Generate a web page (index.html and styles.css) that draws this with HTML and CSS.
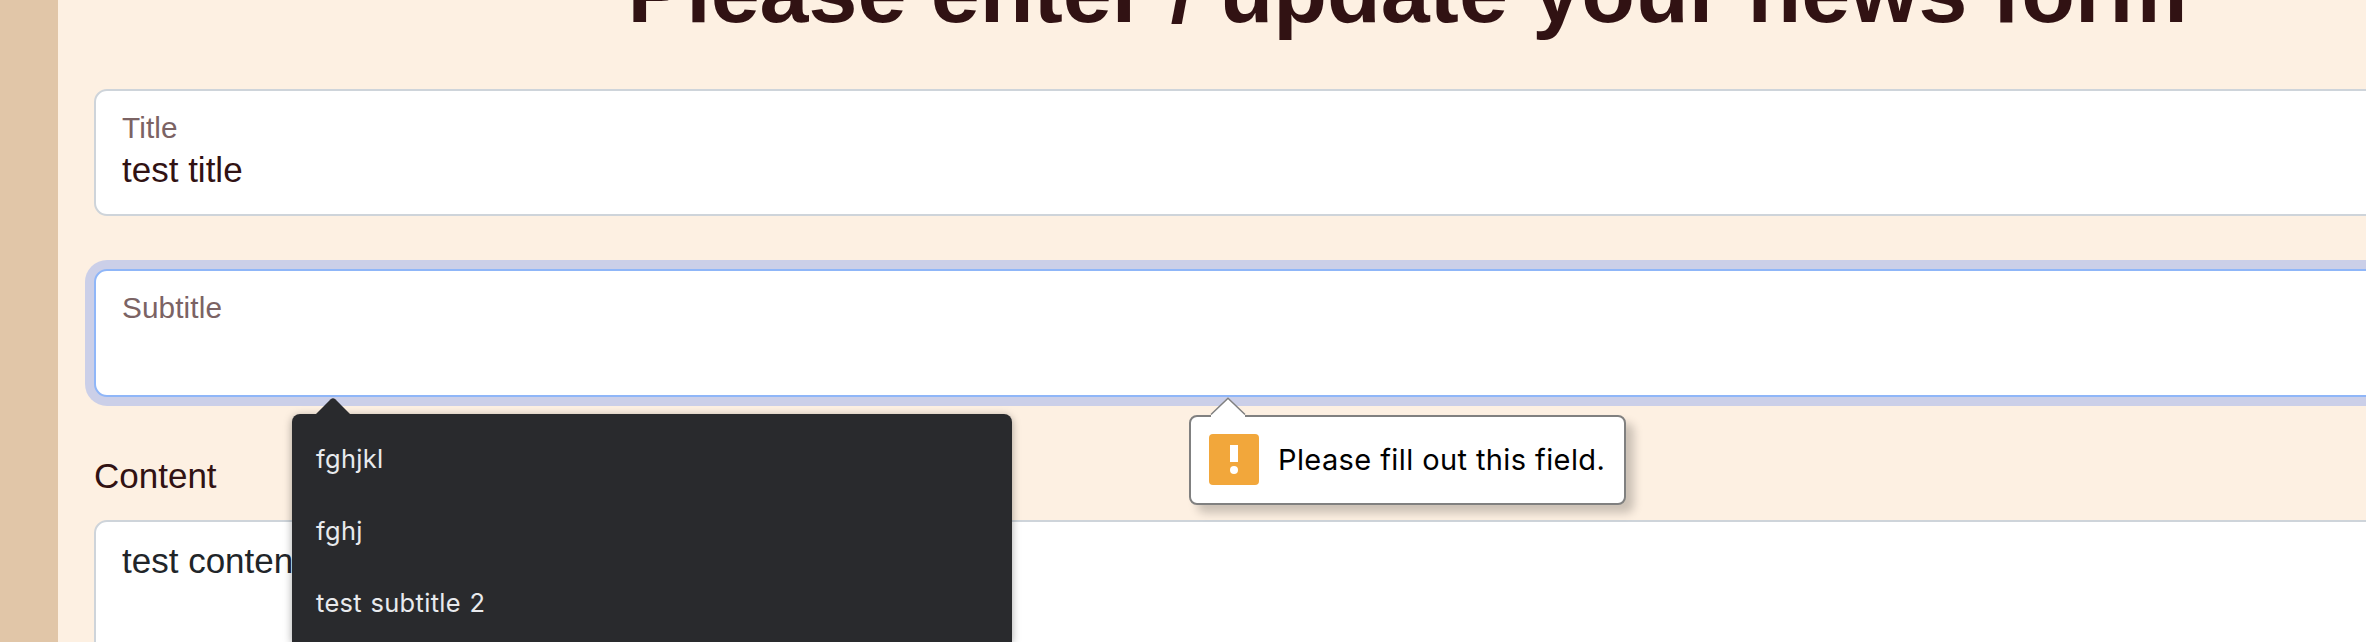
FILE: index.html
```
<!DOCTYPE html>
<html lang="en">
<head>
<meta charset="utf-8">
<title>News form</title>
<link rel="stylesheet" href="styles.css">
</head>
<body>
<main class="panel">
  <h1 class="heading">Please enter / update your news form</h1>
  <form class="form">
    <div class="field">
      <span class="field-label">Title</span>
      <span class="field-value">test title</span>
    </div>
    <div class="field field-focus">
      <span class="field-label">Subtitle</span>
    </div>
    <div class="content-group">
      <span class="content-label">Content</span>
      <div class="content-box">test content</div>
    </div>
  </form>
</main>
<div class="suggestions">
  <svg class="suggestions-arrow" width="36" height="17" viewBox="0 0 36 17"><path d="M0 17 L15.7 1.3 Q18 -.7 20.3 1.3 L36 17Z" fill="#292a2d"/></svg>
  <div class="suggestion">fghjkl</div>
  <div class="suggestion">fghj</div>
  <div class="suggestion">test subtitle 2</div>
</div>
<div class="bubble">
  <svg class="bubble-arrow" width="36" height="20" viewBox="0 0 36 20"><path d="M1 17.5 L18 1.2 L35 17.5 V20 H1Z" fill="#fff"/><path d="M1 17.5 L18 1.2 L35 17.5" fill="none" stroke="#808080" stroke-width="1.5"/></svg>
  <svg class="bubble-icon" width="50" height="51" viewBox="0 0 50 51"><rect width="50" height="51" rx="4" fill="#f2a73b"/><path d="M21 11h8v17h-8z" fill="#fff"/><circle cx="25" cy="36" r="4" fill="#fff"/></svg>
  <span class="bubble-text">Please fill out this field.</span>
</div>
</body>
</html>
```
FILE: styles.css
```
* { box-sizing: border-box; }
html, body { height: 100%; }
body {
  margin: 0;
  overflow: hidden;
  position: relative;
  background: #e1c6a8;
  color: #311213;
  font: 35px/52.5px "Liberation Sans", Arial, sans-serif;
}
.panel {
  display: flow-root;
  width: 2697px;
  height: 642px;
  margin: 0 0 0 58px;
  padding: 0 36px;
  overflow: hidden;
  background: #fdf0e2;
}
.heading {
  margin: -61px 0 44px;
  padding-left: 2px;
  font-size: 88px;
  line-height: 106px;
  font-weight: 700;
  text-align: center;
  white-space: nowrap;
}
.form { display: flex; flex-direction: column; gap: 53px; }
.field {
  display: flex;
  flex-direction: column;
  height: 127px;
  padding: 16px 26px;
  background: #fff;
  border: 2px solid #ced4da;
  border-radius: 13px;
}
.field-focus {
  height: 128px;
  border-color: #8fb6f8;
  box-shadow: 0 0 0 9px #cbcfe8;
}
.field-label { font-size: 29.75px; line-height: 42px; letter-spacing: .1px; color: #7b6364; }
.field-value { line-height: 42px; }
.content-group { display: flex; flex-direction: column; gap: 18px; }
.content-label { line-height: 52px; }
.content-box {
  height: 240px;
  padding: 13px 26px;
  background: #fff;
  color: #212529;
  border: 2px solid #ced4da;
  border-radius: 13px;
}
.suggestions {
  position: absolute;
  left: 292px;
  top: 414px;
  width: 720px;
  height: 228px;
  padding: 9px 24px 0;
  background: #292a2d;
  color: #e8eaed;
  border-radius: 8px 8px 0 0;
  box-shadow: 0 2px 8px rgba(0, 0, 0, .35);
  font: 25.4px/72px Inter, sans-serif;
  letter-spacing: .35px;
  word-spacing: 1px;
}
.suggestions-arrow { position: absolute; left: 23px; top: -16px; }
.bubble {
  position: absolute;
  left: 1189px;
  top: 415px;
  width: 437px;
  height: 90px;
  display: flex;
  align-items: center;
  gap: 19px;
  padding: 0 0 1px 18px;
  background: #fff;
  color: #000;
  border: 2px solid #808080;
  border-radius: 8px;
  box-shadow: 8px 8px 10px rgba(0, 0, 0, .2);
  font: 29px/36px Inter, sans-serif;
  letter-spacing: .4px;
  white-space: nowrap;
}
.bubble-text { padding-top: 1px; }
.bubble-arrow { position: absolute; left: 19px; top: -20px; }
```
